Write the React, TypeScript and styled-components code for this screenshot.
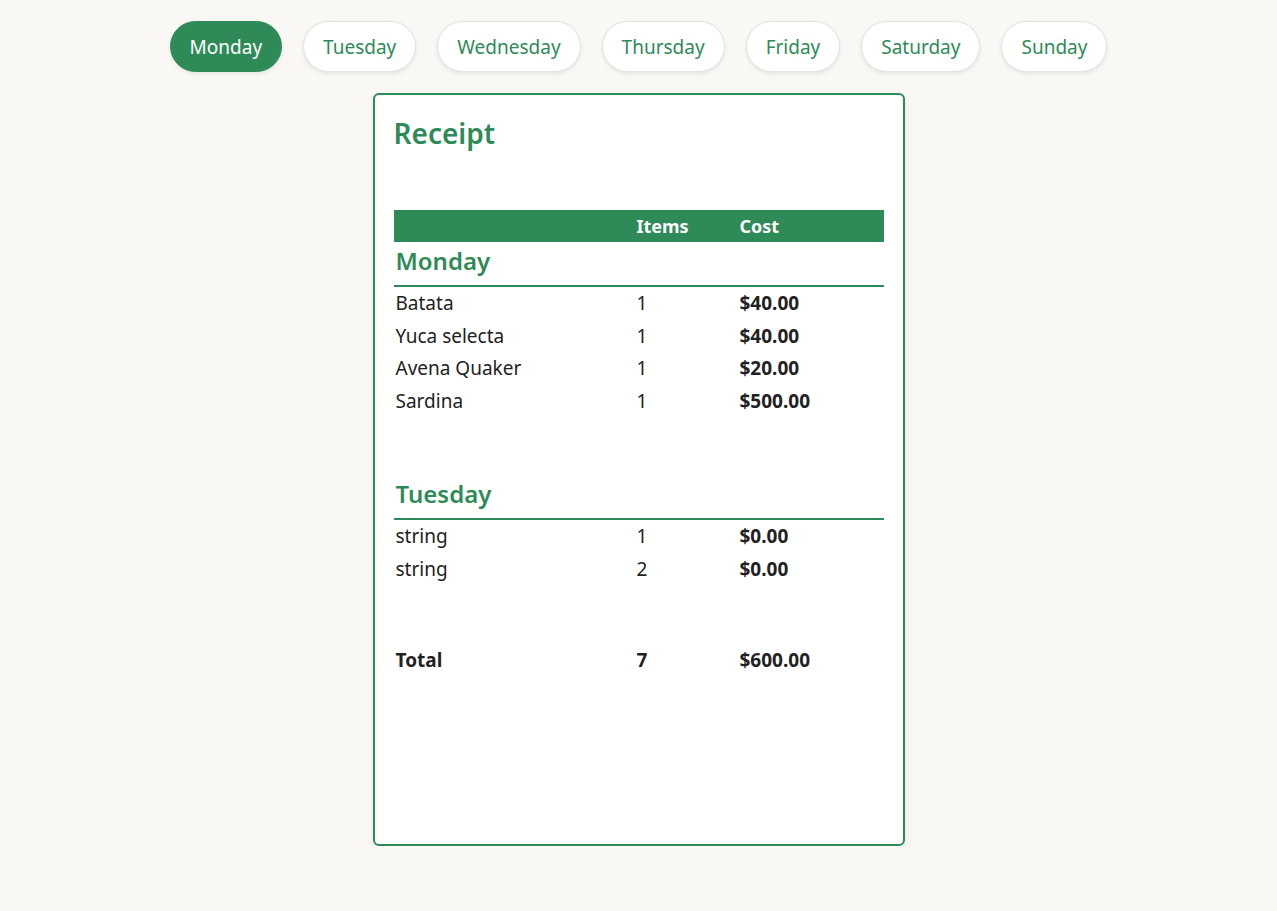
import React from "react";
import styled, { createGlobalStyle } from "styled-components";

const GREEN = "#2e8b57";

const Global = createGlobalStyle`
  html, body { margin: 0; padding: 0; background: #f9f8f5; }
  body { font-family: "Noto Sans", "Open Sans", sans-serif; color: #222; }
  * { box-sizing: border-box; }
`;

const Page = styled.div`
  display: flex;
  flex-direction: column;
  align-items: center;
  padding-top: 21px;
`;

const Tabs = styled.nav`
  display: flex;
  gap: 21px;
  justify-content: center;
`;

const Tab = styled.button<{ $active?: boolean }>`
  height: 51px;
  padding: 0 19px;
  border-radius: 26px;
  border: 1px solid ${(p) => (p.$active ? GREEN : "#e2e2e2")};
  background: ${(p) => (p.$active ? GREEN : "#fff")};
  color: ${(p) => (p.$active ? "#fff" : GREEN)};
  font-family: inherit;
  font-size: 19px;
  box-shadow: 0 2px 4px rgba(0, 0, 0, 0.08);
  cursor: pointer;
`;

const Card = styled.section`
  margin-top: 21px;
  width: 532px;
  height: 753px;
  border: 2px solid ${GREEN};
  border-radius: 6px;
  background: #fff;
  padding: 20px 19px;
  box-shadow: 0 3px 8px rgba(0, 0, 0, 0.08);
`;

const Title = styled.h1`
  margin: 0 0 59px;
  font-size: 28px;
  line-height: 36px;
  font-weight: 600;
  color: ${GREEN};
`;

const Row = styled.div<{ $bold?: boolean }>`
  display: grid;
  grid-template-columns: 241px 103px 1fr;
  height: 32.5px;
  align-items: center;
  font-size: 19px;
  font-weight: ${(p) => (p.$bold ? 700 : 400)};
  padding-left: 2px;
`;

const HeadRow = styled(Row)`
  background: ${GREEN};
  color: #fff;
  font-weight: 700;
  height: 32px;
  font-size: 18px;
`;

const Cost = styled.span`
  font-weight: 700;
`;

const DayTitle = styled.h2`
  margin: 0;
  height: 45px;
  padding: 0 2px 7px;
  display: flex;
  align-items: center;
  font-size: 24px;
  font-weight: 600;
  color: ${GREEN};
  border-bottom: 2px solid ${GREEN};
`;

const Section = styled.div<{ $first?: boolean }>`
  margin-top: ${(p) => (p.$first ? 0 : 58)}px;
`;

const TotalRow = styled(Row)`
  margin-top: 59px;
`;

const data = [
  {
    day: "Monday",
    items: [
      ["Batata", "1", "$40.00"],
      ["Yuca selecta", "1", "$40.00"],
      ["Avena Quaker", "1", "$20.00"],
      ["Sardina", "1", "$500.00"],
    ],
  },
  {
    day: "Tuesday",
    items: [
      ["string", "1", "$0.00"],
      ["string", "2", "$0.00"],
    ],
  },
];

const days = ["Monday", "Tuesday", "Wednesday", "Thursday", "Friday", "Saturday", "Sunday"];

export default function App() {
  return (
    <Page>
      <Global />
      <Tabs>
        {days.map((d, i) => (
          <Tab key={d} $active={i === 0}>
            {d}
          </Tab>
        ))}
      </Tabs>
      <Card>
        <Title>Receipt</Title>
        <HeadRow>
          <span />
          <span>Items</span>
          <span>Cost</span>
        </HeadRow>
        {data.map((s, i) => (
          <Section key={s.day} $first={i === 0}>
            <DayTitle>{s.day}</DayTitle>
            {s.items.map((it, j) => (
              <Row key={j}>
                <span>{it[0]}</span>
                <span>{it[1]}</span>
                <Cost>{it[2]}</Cost>
              </Row>
            ))}
          </Section>
        ))}
        <TotalRow $bold>
          <span>Total</span>
          <span>7</span>
          <span>$600.00</span>
        </TotalRow>
      </Card>
    </Page>
  );
}
